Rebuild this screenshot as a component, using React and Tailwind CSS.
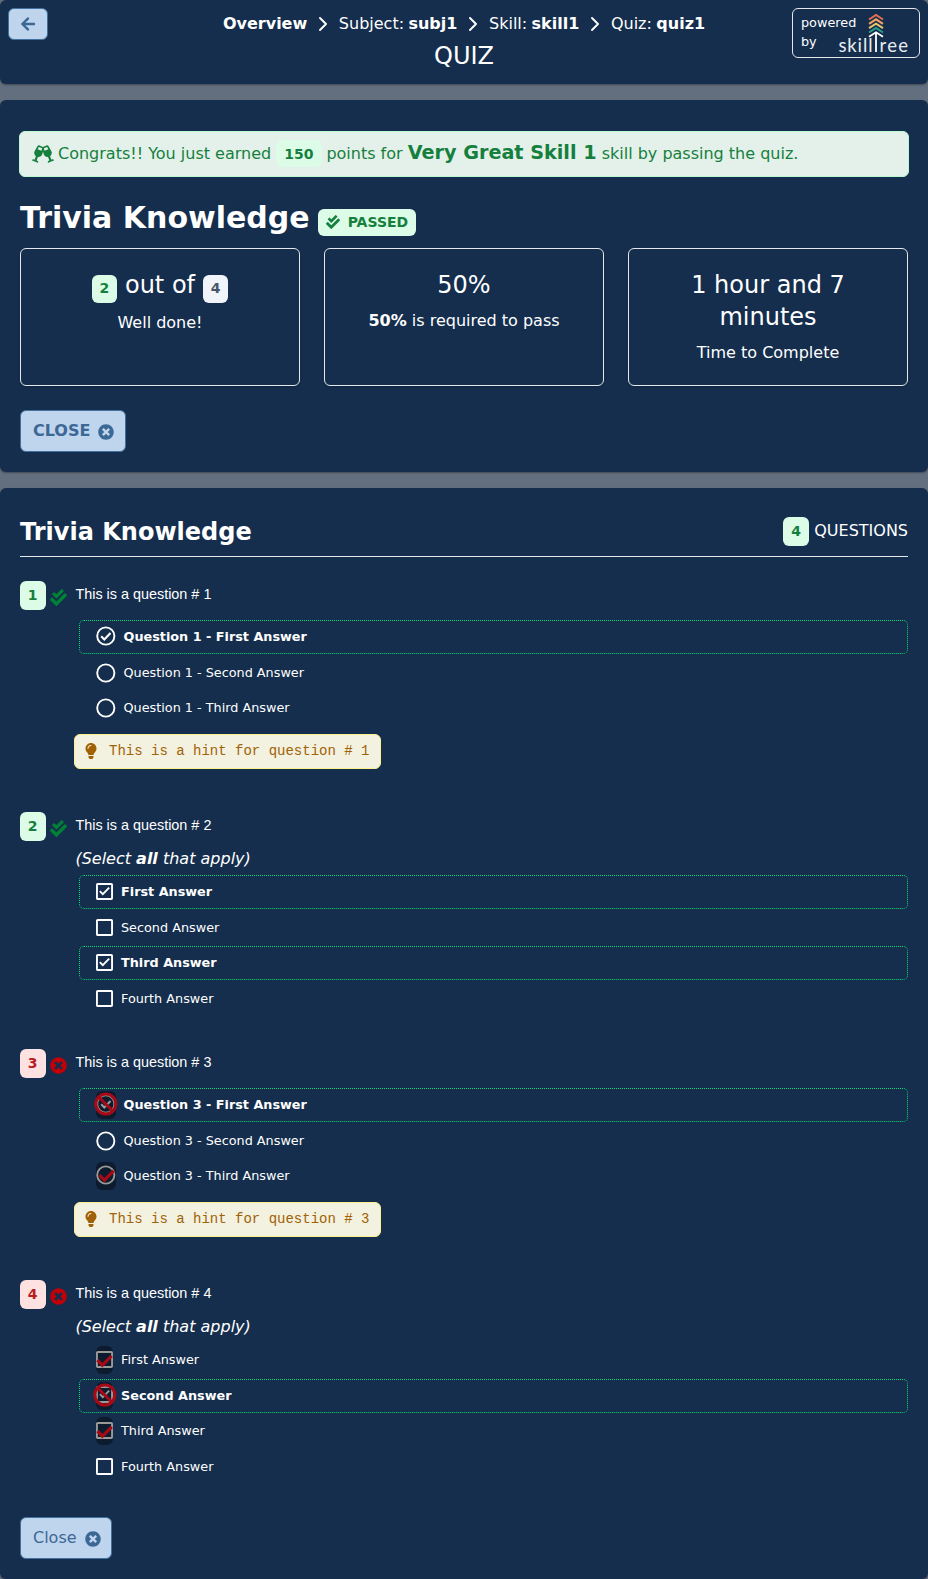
import React from "react";
import {
  FaArrowLeft,
  FaCheckDouble,
  FaGlassCheers,
  FaLightbulb,
  FaTimesCircle,
} from "react-icons/fa";

const crumbs = [
  { label: "", value: "Overview" },
  { label: "Subject: ", value: "subj1" },
  { label: "Skill: ", value: "skill1" },
  { label: "Quiz: ", value: "quiz1" },
];

const questions = [
  {
    id: 1,
    passed: true,
    kind: "radio",
    hint: true,
    answers: [
      { text: "Question 1 - First Answer", correct: true, checked: true },
      { text: "Question 1 - Second Answer" },
      { text: "Question 1 - Third Answer" },
    ],
  },
  {
    id: 2,
    passed: true,
    kind: "check",
    answers: [
      { text: "First Answer", correct: true, checked: true },
      { text: "Second Answer" },
      { text: "Third Answer", correct: true, checked: true },
      { text: "Fourth Answer" },
    ],
  },
  {
    id: 3,
    passed: false,
    kind: "radio",
    hint: true,
    answers: [
      { text: "Question 3 - First Answer", correct: true, checked: true, mark: "ban" },
      { text: "Question 3 - Second Answer" },
      { text: "Question 3 - Third Answer", mark: "check" },
    ],
  },
  {
    id: 4,
    passed: false,
    kind: "check",
    answers: [
      { text: "First Answer", mark: "check" },
      { text: "Second Answer", correct: true, checked: true, mark: "ban" },
      { text: "Third Answer", mark: "check" },
      { text: "Fourth Answer" },
    ],
  },
];

function Chevron() {
  return (
    <svg width="8" height="14" viewBox="0 0 8 14" fill="none" stroke="white" strokeWidth="1.9" strokeLinecap="round" strokeLinejoin="round">
      <path d="M1 1l6 6-6 6" />
    </svg>
  );
}

function Logo() {
  const leaves = [
    ["#e76f51", 15],
    ["#f4a261", 19.3],
    ["#e9c46a", 23.7],
    ["#2a9d8f", 28],
  ];
  return (
    <svg className="absolute left-[44px] top-[4px]" width="74" height="44" viewBox="837 13 74 44" fill="none">
      {leaves.map(([color, y]) => (
        <path key={color} d={`M869 ${y + 4.5}L876 ${y}L883 ${y + 4.5}`} stroke={color} strokeWidth="2" />
      ))}
      <path d="M869 36.8L876 32.3L883 36.8M876 32.5V52" stroke="white" strokeWidth="1.8" />
      <g fill="#e8ecf1" fontFamily="Lato, sans-serif" fontSize="18.5">
        <text x="838.5" y="52" textLength="34" lengthAdjust="spacing">skill</text>
        <text x="879.5" y="52" textLength="28.5" lengthAdjust="spacing">ree</text>
      </g>
    </svg>
  );
}

function AnswerIcon({ kind, checked, mark }) {
  const radio = kind === "radio";
  return (
    <span
      className={`relative flex h-[28px] shrink-0 items-center ${radio ? "w-[20px]" : "w-[17px]"} ${
        checked || mark ? "pb-[2px]" : ""
      }`}
    >
      {radio ? (
        <svg className="shrink-0" width="20" height="20" viewBox="0 0 20 20" fill="none" stroke="white" strokeWidth="1.9">
          <circle cx="9.8" cy="10" r="8.6" />
          {checked && <path d="M5.2 10.3l3.1 3.1 6.2-6.4" strokeWidth="2.1" />}
        </svg>
      ) : (
        <svg className="shrink-0" width="17" height="17" viewBox="0 0 17 17" fill="none" stroke="white" strokeWidth="1.9">
          <rect x="0.95" y="0.95" width="15.1" height="15.1" rx="0.8" />
          {checked && <path d="M3.8 8.2l3 3 6.4-6.6" />}
        </svg>
      )}
      {mark && (
        <span className={`absolute inset-0 flex items-center justify-center rounded-md bg-black/40 ${radio || mark === "ban" ? "pb-[2px]" : ""}`}>
          {mark === "ban" ? (
            <svg className="size-[24px] shrink-0" viewBox="0 0 24 24" fill="none" stroke="#a50a16" strokeWidth="3.1">
              <circle cx="11.8" cy="12" r="10" />
              <path d="M4.8 5l14 14" />
            </svg>
          ) : (
            <svg className="size-[17px] shrink-0" viewBox="0 0 17 17" fill="none" stroke="#a50a16" strokeWidth="3.1">
              <path d="M1.4 8.2l5 5 9.3-9.3" />
            </svg>
          )}
        </span>
      )}
    </span>
  );
}

function Answer({ kind, answer }) {
  const shifted = kind === "radio" && answer.mark === "check";
  return (
    <div
      className={`ml-[59px] flex h-[34px] items-center rounded-[5px] border border-dotted pl-4 text-[12.8px] ${
        answer.correct ? "border-[#05df72] font-bold" : "border-transparent"
      } ${shifted ? "mb-[0.5px] mt-px" : "mb-[1.5px]"}`}
    >
      <AnswerIcon kind={kind} checked={answer.checked} mark={answer.mark} />
      <span className={kind === "radio" ? "ml-[7.5px]" : "ml-2"}>{answer.text}</span>
    </div>
  );
}

function Question({ q }) {
  return (
    <section className={q.kind === "radio" ? "h-[231px]" : "h-[237px]"}>
      <div className="flex h-[29px]">
        <span
          className={`flex w-[26px] items-center justify-center rounded-md pb-px pr-px text-sm font-bold ${
            q.passed ? "bg-[#dcfce7] text-[#15803d]" : "bg-[#fee2e2] text-[#b91c1c]"
          }`}
        >
          {q.id}
        </span>
        {q.passed ? (
          <FaCheckDouble className="ml-1 mt-[8px] size-[17px] text-[#008236]" />
        ) : (
          <FaTimesCircle className="ml-1 mt-[8px] size-[17px] text-[#c10007]" />
        )}
        <span className="ml-[8.4px] mt-[3px] font-['Liberation_Sans',sans-serif] text-[14.4px] leading-5">
          This is a question # {q.id}
        </span>
      </div>
      {q.kind === "radio" ? (
        <div className="h-[10px]" />
      ) : (
        <div className="flex h-[34px] items-end pb-[4px] pl-[55.4px] text-base italic leading-6">
          <span>
            (Select <b>all</b> that apply)
          </span>
        </div>
      )}
      {q.answers.map((a) => (
        <Answer key={a.text} kind={q.kind} answer={a} />
      ))}
      {q.hint && (
        <div className="ml-[54px] mt-[8.5px] flex h-[35px] w-[307px] items-center rounded-md border border-[#fef08a] bg-[#f3f1df] pl-[8px] font-['Liberation_Mono',monospace] text-sm text-[#a16207]">
          <FaLightbulb className="size-[16px]" />
          <span className="ml-[10px] whitespace-nowrap">This is a hint for question # {q.id}</span>
        </div>
      )}
    </section>
  );
}

function CloseButton({ children, className }) {
  return (
    <button className={`flex h-[42px] items-center rounded-md border border-[#41709f] bg-[#bfd4ed] pl-[12px] text-base text-[#3c6896] ${className}`}>
      <span>{children}</span>
      <FaTimesCircle className="ml-2 mt-[2px] size-[16px]" />
    </button>
  );
}

const panel = "rounded-md bg-[#152e4d] shadow-[0_1px_2px_rgba(0,0,0,0.35)]";
const card = "h-[138px] rounded-md border border-[#e5e7eb] px-5 pt-[20px] text-center shadow-[0_1px_2px_rgba(0,0,0,0.2)]";

export default function App() {
  return (
    <div className="flex h-[1579px] w-[928px] flex-col gap-4 bg-[#636e7e] font-['DejaVu_Sans',sans-serif] text-white">
      <header className={`${panel} relative h-[84px] shrink-0`}>
        <button className="absolute left-2 top-2 flex h-8 w-10 items-center justify-center rounded-md border border-[#41709f] bg-[#bfd4ed] text-[#3c6896]">
          <FaArrowLeft className="size-[16px]" />
        </button>
        <nav className="flex items-center justify-center gap-[11.8px] pt-3 text-base leading-6">
          {crumbs.map((c, i) => (
            <React.Fragment key={c.value}>
              {i > 0 && <Chevron />}
              <span>
                {c.label}
                <b className={c.label ? "-ml-[0.7px]" : ""}>{c.value}</b>
              </span>
            </React.Fragment>
          ))}
        </nav>
        <h1 className="mt-1 text-center text-2xl leading-8">QUIZ</h1>
        <div className="absolute right-2 top-2 h-[50px] w-32 rounded-md border border-[#e5e7eb] pl-2 pt-1 text-[12.8px] leading-[19px]">
          <div>powered</div>
          <div>by</div>
          <Logo />
        </div>
      </header>

      <main className={`${panel} h-[372px] shrink-0 px-5 pt-[31px]`}>
        <div className="-mx-px flex h-[46px] items-center rounded-md border border-[#bbf7d0] bg-[#e4f1ea] pl-3 text-[#15803d]">
          <FaGlassCheers className="h-[18px] w-[22px]" />
          <p className="mb-[2px] ml-[4px] whitespace-nowrap leading-7">
            Congrats!! You just earned{" "}
            <span className="inline-flex h-[27px] w-[46px] items-center justify-center rounded-md bg-[#dcfce7] pr-px text-sm font-bold">150</span>{" "}
            <span className="-ml-px">points for</span> <b className="text-[19.2px] leading-7">Very Great Skill 1</b> skill by passing the quiz.
          </p>
        </div>
        <div className="mt-[22px] flex h-[49px]">
          <h2 className="mt-px text-3xl font-bold leading-9">Trivia Knowledge</h2>
          <span className="ml-[8px] mt-[10px] flex h-[27px] items-center gap-2 rounded-md bg-[#dcfce7] px-2 pb-px text-sm font-bold text-[#15803d]">
            <FaCheckDouble />
            PASSED
          </span>
        </div>
        <div className="grid grid-cols-3 gap-6">
          <div className={card}>
            <div className="flex h-[34px] items-start justify-center gap-2 text-2xl leading-8">
              <span className="mt-[6px] flex h-[28px] w-[25px] items-center justify-center rounded-md bg-[#dcfce7] pb-[2px] text-sm font-bold text-[#15803d]">2</span>
              <span>out of</span>
              <span className="mt-[6px] flex h-[28px] w-[25px] items-center justify-center rounded-md bg-[#f1f5f9] pb-[2px] text-sm font-bold text-[#475569]">4</span>
            </div>
            <div className="mt-2">Well done!</div>
          </div>
          <div className={card}>
            <div className="text-2xl leading-8">50%</div>
            <div className="mt-2">
              <b>50%</b> is required to pass
            </div>
          </div>
          <div className={card}>
            <div className="text-2xl leading-8">1 hour and 7 minutes</div>
            <div className="mt-2">Time to Complete</div>
          </div>
        </div>
        <CloseButton className="mt-6 w-[106px] font-bold">CLOSE</CloseButton>
      </main>

      <section className={`${panel} h-[1091px] shrink-0 px-5 pt-6`}>
        <div className="flex h-[45px] items-start justify-between border-b border-[#e5e7eb]">
          <h2 className="mt-[4px] text-2xl font-bold leading-8">Trivia Knowledge</h2>
          <div className="flex pt-[5px]">
            <span className="flex h-[29px] w-[26px] items-center justify-center rounded-md bg-[#dcfce7] pb-px text-sm font-bold text-[#15803d]">4</span>
            <span className="ml-[5px] mt-[2px] leading-6">QUESTIONS</span>
          </div>
        </div>
        <div className="mt-6">
          {questions.map((q) => (
            <Question key={q.id} q={q} />
          ))}
        </div>
        <CloseButton className="w-[92px]">Close</CloseButton>
      </section>
    </div>
  );
}
